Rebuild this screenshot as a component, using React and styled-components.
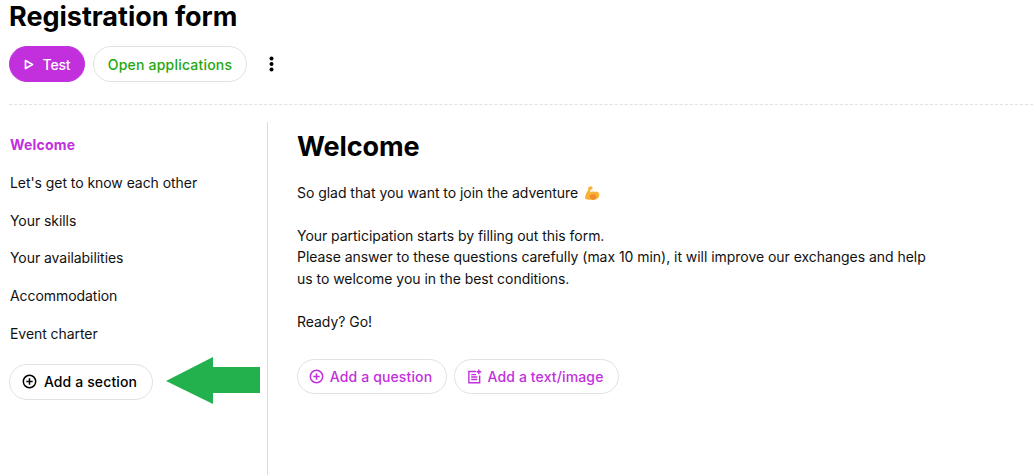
import React from "react";
import styled, { createGlobalStyle } from "styled-components";

const Global = createGlobalStyle`
  html, body { margin: 0; padding: 0; background: #fff; }
  body { font-family: Inter, "Liberation Sans", sans-serif; color: #000; overflow: hidden; }
`;
const Page = styled.div`
  width: 1033px; height: 475px; overflow: hidden; display: flex; flex-direction: column;
  padding-left: 9px; box-sizing: border-box;
`;
const Title = styled.h1`
  margin: 0; height: 46px; font-size: 27px; line-height: 33px; font-weight: 700; letter-spacing: -0.02px;
`;
const Toolbar = styled.div`
  display: flex; align-items: center; gap: 8px; height: 36px;
`;
const Pill = styled.button`
  display: inline-flex; align-items: center; justify-content: center; gap: ${p => p.$gap || 6}px;
  box-sizing: border-box; width: ${p => p.$w}px; height: ${p => p.$h || 36}px; padding: 0 ${p => p.$padEnd || 0}px 0 0;
  border-radius: 18px; border: 1px solid ${p => p.$primary ? "#c22fdc" : "#e2e2e2"};
  background: ${p => p.$primary ? "#c22fdc" : "#fff"};
  color: ${p => p.$color || "#000"};
  font-family: inherit; font-size: 14px; font-weight: 500; letter-spacing: ${p => p.$spacing ?? 0.13}px;
`;
const More = styled.div`
  margin-left: 4px; width: 24px; display: flex; justify-content: center;
`;
const Divider = styled.hr`
  margin: 22px 0 17px; border: 0; border-top: 1px dashed #e0e0e6; height: 0; width: 100%;
`;
const Body = styled.div`
  flex: 1; display: flex; min-height: 0;
`;
const Side = styled.nav`
  width: 259px; box-sizing: border-box; border-right: 1px solid #dcdce4; display: flex; flex-direction: column;
  padding-top: 4px;
`;
const NavItem = styled.div`
  height: 37.8px; line-height: 37.8px; padding-left: 1px; font-size: 14px;
  letter-spacing: ${p => p.$active ? 0.2 : -0.06}px;
  font-weight: ${p => p.$active ? 700 : 400};
  color: ${p => p.$active ? "#c22fdc" : "#111"};
`;
const AddRow = styled.div`
  display: flex; align-items: center; margin-top: 7px; gap: 13px;
`;
const Arrow = styled.svg`
  margin-top: -3px;
`;
const Main = styled.main`
  padding: 7px 0 0 29px; width: 680px;
`;
const H2 = styled.h2`
  margin: 0 0 17px; font-size: 27px; line-height: 36px; font-weight: 700; letter-spacing: -0.1px;
`;
const Para = styled.p`
  margin: 0 0 21.6px; font-size: 14px; line-height: 21.4px; color: #111; letter-spacing: -0.04px;
`;
const Emoji = styled.svg`
  vertical-align: -3px; margin-left: 6px;
`;
const Actions = styled.div`
  display: flex; gap: 7px; margin-top: 27px;
`;
const PURPLE = "#c22fdc";

const PlusCircle = ({ color, size = 15 }) => (
  <svg width={size} height={size} viewBox="0 0 16 16" fill="none" stroke={color} strokeWidth="1.6">
    <circle cx="8" cy="8" r="6.6" />
    <path d="M8 4.6v6.8M4.6 8h6.8" />
  </svg>
);
const NoteAdd = () => (
  <svg width="15" height="15" viewBox="0 0 16 16" fill="none" stroke={PURPLE} strokeWidth="1.5">
    <path d="M9.5 2.6H2v12h11.5V7" />
    <path d="M4.5 6h5M4.5 8.6h6.5M4.5 11.2h6.5" />
    <path d="M12.6 0.5v5M10.2 3h5" />
  </svg>
);
const Flex = () => (
  <Emoji width="16" height="16" viewBox="0 0 16 16">
    <path d="M1 13.5C1 10 2.500 7.500 4.500 4.500L4 3.200C4.200 1.800 6 1.200 7.800 1.500L8.700 2.700L8.300 4.300L6.700 4.500L6 7.500C7.500 6.500 9.500 6.200 10.500 7C12 5.800 15 6.500 15.300 9.500C15.500 12.500 13 14.800 9.500 14.800C6 14.800 2.500 15 1 13.500Z" fill="#f9b233" />
    <path d="M6 10.500C8 8.800 10.500 8.800 12 10.500C13 12 11 14.800 9.500 14.800C7 14.800 5 13 6 10.500Z" fill="#f08c2e" />
  </Emoji>
);

export default function App() {
  return (
    <Page>
      <Global />
      <Title>Registration form</Title>
      <Toolbar>
        <Pill $primary $w={76} $color="#fff" $gap={9} $spacing={-0.15}>
          <svg width="10" height="11" viewBox="0 0 10 11" fill="none" stroke="#fff" strokeWidth="1.7" strokeLinejoin="round">
            <path d="M1.500 1.500L8.500 5.500L1.500 9.500Z" />
          </svg>
          Test
        </Pill>
        <Pill $w={154} $color="#1fa80d" $spacing={0.2}>Open applications</Pill>
        <More>
          <svg width="5" height="16" viewBox="0 0 5 16" fill="#000">
            <circle cx="2.500" cy="2.500" r="2" />
            <circle cx="2.500" cy="8" r="2" />
            <circle cx="2.500" cy="13.500" r="2" />
          </svg>
        </More>
      </Toolbar>
      <Divider />
      <Body>
        <Side>
          <NavItem $active>Welcome</NavItem>
          <NavItem>Let's get to know each other</NavItem>
          <NavItem>Your skills</NavItem>
          <NavItem>Your availabilities</NavItem>
          <NavItem>Accommodation</NavItem>
          <NavItem>Event charter</NavItem>
          <AddRow>
            <Pill $w={144} $gap={7} $padEnd={3}>
              <PlusCircle color="#000" />
              Add a section
            </Pill>
            <Arrow width="94" height="47" viewBox="0 0 94 47" fill="#22b14c">
              <path d="M0 24L47 0V10H94V36H47V47Z" />
            </Arrow>
          </AddRow>
        </Side>
        <Main>
          <H2>Welcome</H2>
          <Para>So glad that you want to join the adventure<Flex /></Para>
          <Para>
            Your participation starts by filling out this form.<br />
            Please answer to these questions carefully (max 10 min), it will improve our exchanges and help<br />
            us to welcome you in the best conditions.
          </Para>
          <Para>Ready? Go!</Para>
          <Actions>
            <Pill $w={150} $h={35} $color={PURPLE} $padEnd={3}>
              <PlusCircle color={PURPLE} />
              Add a question
            </Pill>
            <Pill $w={165} $h={35} $color={PURPLE} $padEnd={3}>
              <NoteAdd />
              Add a text/image
            </Pill>
          </Actions>
        </Main>
      </Body>
    </Page>
  );
}
